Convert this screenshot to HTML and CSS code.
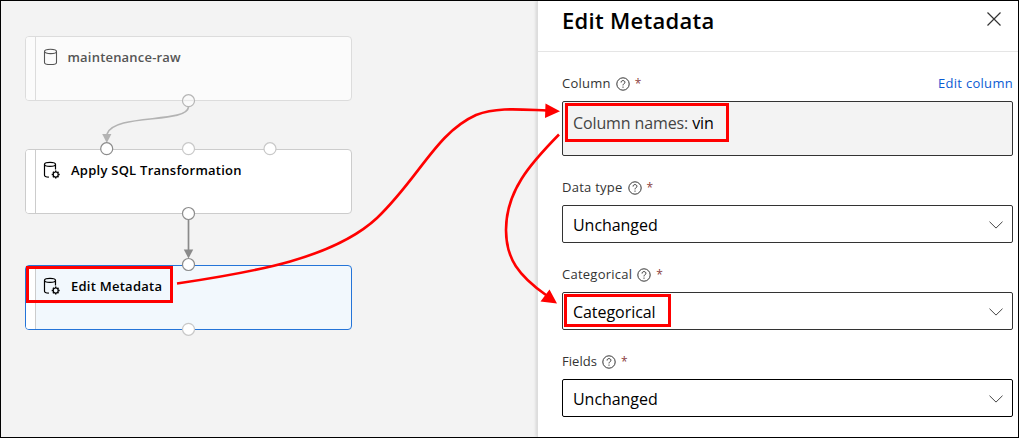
FILE: index.html
```
<!DOCTYPE html>
<html lang="en">
<head>
<meta charset="utf-8">
<title>Edit Metadata</title>
<link rel="stylesheet" href="styles.css">
</head>
<body>
<svg class="defs" width="0" height="0" aria-hidden="true">
  <symbol id="help" viewBox="0 0 14 14"><circle cx="7" cy="7" r="6.2" fill="none" stroke="currentColor"/><path d="M5.1 5.5C5.1 4.2 5.9 3.6 7 3.6s1.9.7 1.9 1.7c0 1.4-1.9 1.6-1.9 3.1" fill="none" stroke="currentColor"/><circle cx="7" cy="10.1" r=".7" fill="currentColor"/></symbol>
  <symbol id="chevron" viewBox="0 0 14 8"><path d="M.5.7 7 7.1 13.500.7" fill="none" stroke="currentColor"/></symbol>
  <symbol id="dataset" viewBox="0 0 16 18"><path d="M1.500 3.400v11c0 1.300 2.600 2.100 6 2.100s6-.8 6-2.100v-11" fill="none" stroke="currentColor" stroke-width="1.100"/><ellipse cx="7.500" cy="3.400" rx="6" ry="2.200" fill="none" stroke="currentColor" stroke-width="1.100"/></symbol>
  <symbol id="transform" viewBox="0 0 18 18"><path d="M1.500 3.300v10.900c0 1.200 1.800 1.900 4.400 2M1.500 3.300c0-1.200 2.400-2 5.500-2s5.500.8 5.500 2-2.400 2.100-5.500 2.100-5.500-.9-5.500-2.100ZM12.500 3.300v5.200" fill="none" stroke="currentColor" stroke-width="1.200"/><circle cx="12.700" cy="13.500" r="2.500" fill="none" stroke="currentColor" stroke-width="1.200"/><path d="M12.700 9.500v1.500M12.700 16v1.500M8.700 13.500h1.500M15.200 13.500h1.500M9.900 10.700l1 1M14.500 15.300l1 1M15.500 10.700l-1 1M10.900 15.300l-1 1" stroke="currentColor" stroke-width="1.500"/></symbol>
</svg>
<div class="app">
  <main class="canvas">
    <section class="node node-source"><div class="grip"></div><div class="node-body"><svg class="node-icon source-icon"><use href="#dataset"/></svg><span class="node-name source-name">maintenance-raw</span></div></section>
    <section class="node node-sql"><div class="grip"></div><div class="node-body"><svg class="node-icon"><use href="#transform"/></svg><span class="node-name sql-name">Apply SQL Transformation</span></div></section>
    <section class="node node-edit"><div class="grip"></div><div class="node-body"><svg class="node-icon"><use href="#transform"/></svg><span class="node-name edit-name">Edit Metadata</span></div></section>
  </main>
  <aside class="panel">
    <header class="panel-header"><h1 class="title">Edit Metadata</h1><svg class="close" viewBox="0 0 14 14"><path d="M.5.5l13 13M13.500.5l-13 13" stroke="currentColor" stroke-width="1.200"/></svg></header>
    <div class="form">
      <div class="field"><div class="label"><span class="l-column">Column</span><svg class="help"><use href="#help"/></svg><span class="required">*</span><a class="edit-link">Edit column</a></div><div class="column-box"><span class="column-value">Column names: <span class="vin">vin</span></span></div></div>
      <div class="field"><div class="label"><span class="l-type">Data type</span><svg class="help"><use href="#help"/></svg><span class="required">*</span></div><div class="select"><span>Unchanged</span><svg class="chevron"><use href="#chevron"/></svg></div></div>
      <div class="field"><div class="label"><span class="l-cat">Categorical</span><svg class="help"><use href="#help"/></svg><span class="required">*</span></div><div class="select"><span>Categorical</span><svg class="chevron"><use href="#chevron"/></svg></div></div>
      <div class="field"><div class="label"><span class="l-fields">Fields</span><svg class="help"><use href="#help"/></svg><span class="required">*</span></div><div class="select select-dark"><span>Unchanged</span><svg class="chevron"><use href="#chevron"/></svg></div></div>
    </div>
  </aside>
  <svg class="overlay" viewBox="0 0 1019 438" fill="none">
    <path d="M188.500 107C187 124 114 113 107 134" stroke="#b3b3b3" stroke-width="1.700"/>
    <path d="M102.200 134h9.200l-4.600 9Z" fill="#b3b3b3"/>
    <path d="M188.500 219v32" stroke="#8a8a8a" stroke-width="1.700"/>
    <path d="M183.800 249.500h9.400l-4.700 9Z" fill="#8a8a8a"/>
    <g fill="#fff" stroke="#8c8c8c" stroke-width="1.200">
      <circle cx="188.500" cy="100.700" r="6" fill="#fafafa" stroke="#b5b5b5"/><path d="M183 100.500h11" stroke="#e8e8e8"/>
      <circle cx="106.700" cy="148.700" r="6"/><circle cx="188.500" cy="148.700" r="6" stroke="#c8c8c8"/><circle cx="270" cy="148.700" r="6" stroke="#c8c8c8"/>
      <circle cx="188.500" cy="213.500" r="6"/><circle cx="188.500" cy="264.500" r="6"/><circle cx="188.500" cy="329.300" r="6" stroke="#c8c8c8"/>
    </g>
    <g stroke="#f00" stroke-width="3"><rect x="27.500" y="267.500" width="144" height="34"/><rect x="566.500" y="104.500" width="161" height="36"/><rect x="565.500" y="295.500" width="104" height="30"/></g>
    <g stroke="#f00" stroke-width="2.600">
      <path d="M177 283.500C255 272 334 258 377 218C419 178 436 133 476 115C497 107 520 109.500 547 110.500"/>
      <path d="M559 134.500C530 164 506 191 506 230C506 259 519 276 546 295"/>
    </g>
    <path d="M545.500 103.500 560 111.300 545 118ZM549.500 289.500 557 303.500 540.500 301.500Z" fill="#f00"/>
  </svg>
</div>
</body>
</html>
```

FILE: styles.css
```
* { box-sizing: border-box; }
body { margin: 0; font-family: "Open Sans", "Noto Sans", sans-serif; color: #000; }
.defs { position: absolute; }
.app { position: relative; width: 1019px; height: 438px; border: 1px solid #000; display: flex; overflow: hidden; background: #f3f3f3; }
.canvas { position: relative; flex: 1; }
.node { position: absolute; left: 24px; width: 327px; height: 65px; display: flex; border: 1px solid #ccc; border-radius: 4px; background: #fff; overflow: hidden; }
.node-source { top: 35px; background: #fbfbfb; border-color: #dcdcdc; color: #555; }
.node-sql { top: 148px; }
.node-edit { top: 264px; border-color: #2474d8; background: #f2f8fd; }
.grip { width: 10px; border-right: 1px solid #ccc; background: #fff; }
.node-source .grip { border-color: #dcdcdc; background: #fbfbfb; }
.node-body { display: flex; align-items: center; height: 20px; margin-top: 10px; padding-left: 7px; }
.node-icon { width: 18px; height: 18px; flex: none; }
.source-icon { width: 16px; }
.node-name { font-size: 13px; font-weight: 600; letter-spacing: .25px; margin-left: 10px; white-space: nowrap; }
.source-name { margin-left: 8.500px; letter-spacing: .2px; }
.panel { width: 481px; background: #fff; border-left: 1px solid #ddd; box-shadow: -1px 0 3px #0002; display: flex; flex-direction: column; }
.panel-header { height: 51px; border-bottom: 1px solid #e5e5e5; display: flex; justify-content: space-between; padding: 0 17px 0 24px; }
.title { font-size: 22px; line-height: 30px; font-weight: 600; letter-spacing: .28px; margin: 4px 0 0; white-space: nowrap; }
.close { width: 14px; height: 14px; margin-top: 11px; color: #333; }
.form { padding: 20px 5px 0 24px; display: flex; flex-direction: column; gap: 20px; }
.field { display: flex; flex-direction: column; }
.label { display: flex; align-items: center; height: 23px; margin-bottom: 6px; font-size: 13px; line-height: 23px; letter-spacing: .25px; color: #333; white-space: nowrap; }
.l-fields { letter-spacing: .05px; }
.help { width: 14px; height: 14px; margin: 0 5px; flex: none; }
.required { color: #8b4040; font-size: 12px; }
.edit-link { margin-left: auto; color: #0b5bd3; letter-spacing: .3px; }
.column-box { height: 55px; border: 1px solid #333; border-radius: 2px; background: #f3f3f3; padding: 10px; font-size: 16px; line-height: 22px; letter-spacing: -.12px; color: #444; white-space: nowrap; }
.vin { color: #000; }
.select { height: 38px; border: 1px solid #333; border-radius: 2px; display: flex; align-items: center; justify-content: space-between; padding: 1px 9px 0 10px; font-size: 16px; line-height: 22px; letter-spacing: -.05px; }
.select-dark { border-color: #000; }
.chevron { width: 14px; height: 8px; color: #444; }
.overlay { position: absolute; left: -1px; top: -1px; width: 1019px; height: 438px; pointer-events: none; }
```
